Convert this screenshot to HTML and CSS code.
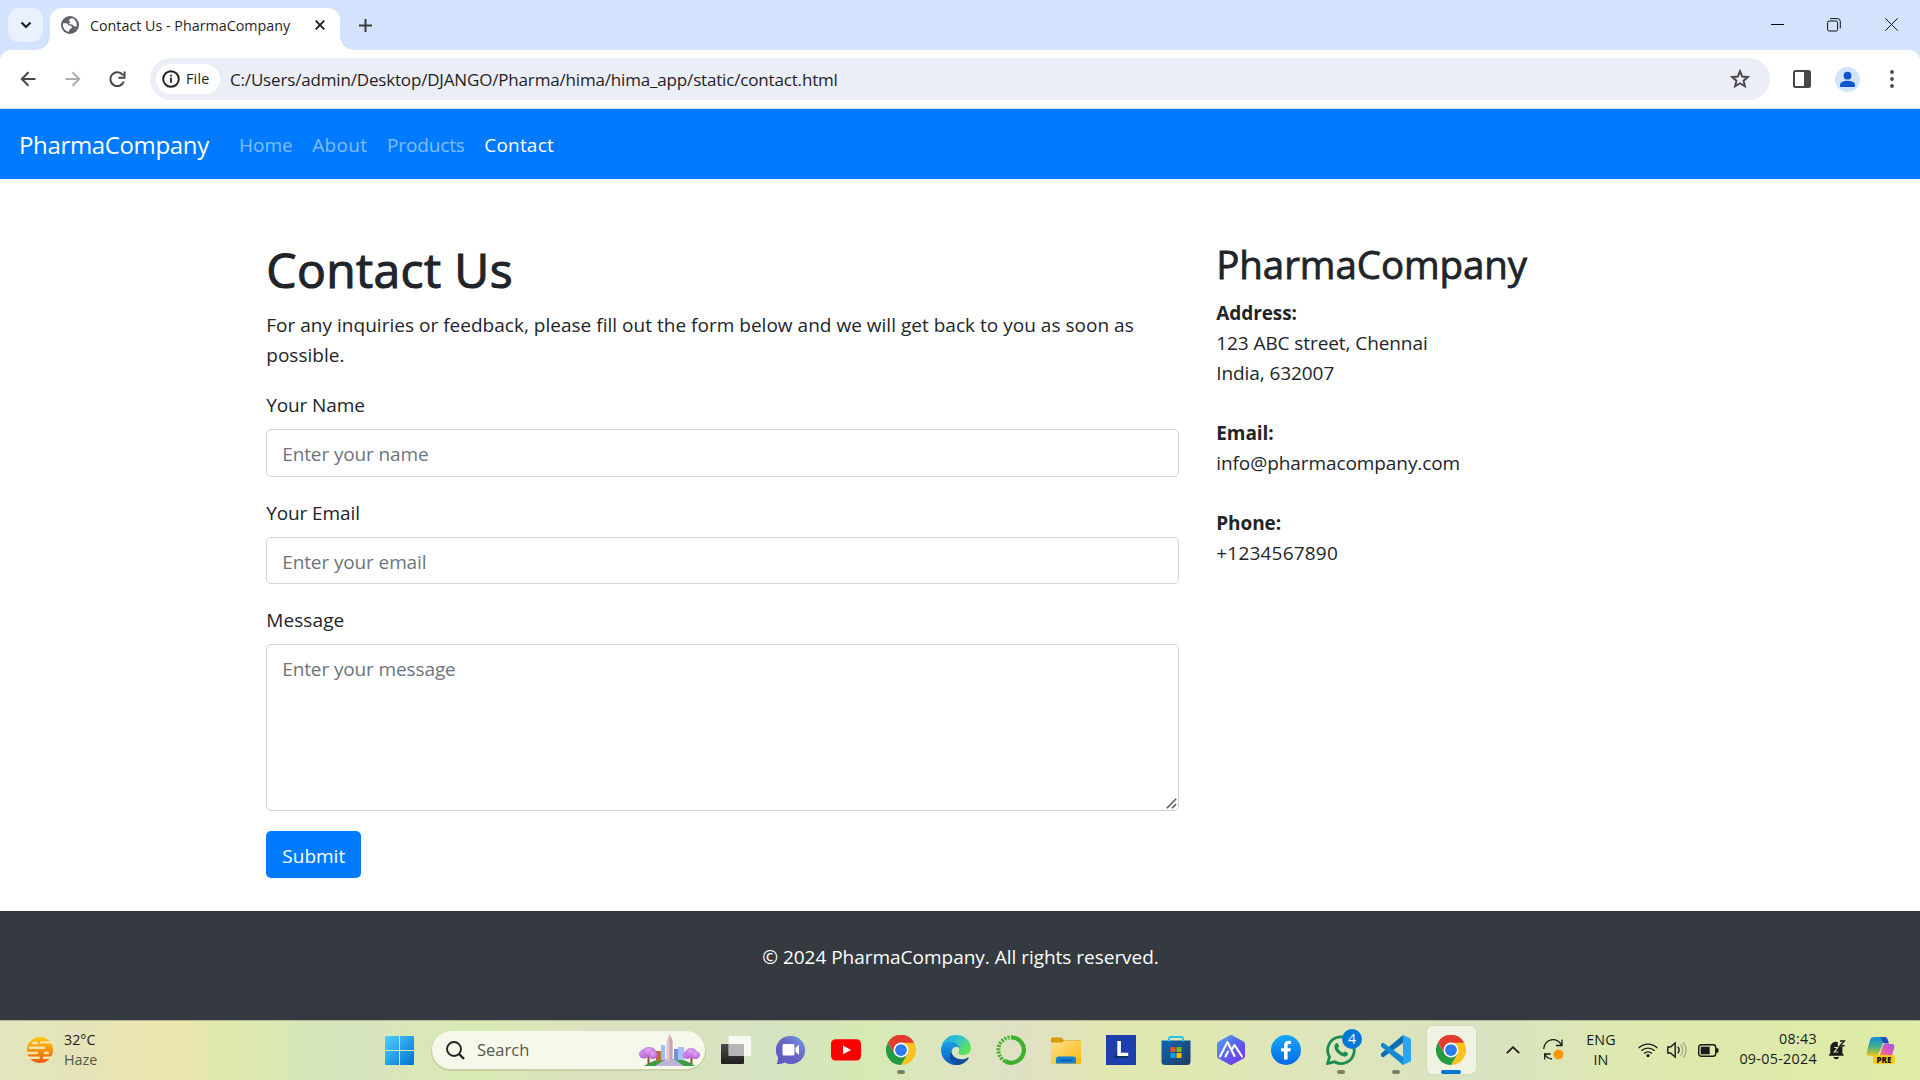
FILE: index.html
```html
<!DOCTYPE html>
<html lang="en">
<head>
<meta charset="utf-8">
<title>Contact Us - PharmaCompany</title>
<link rel="stylesheet" href="styles.css">
</head>
<body>
<svg class="defs" width="0" height="0" aria-hidden="true">
  <defs>
    <symbol id="chrome" viewBox="0 0 48 48">
      <path fill="#e33b2e" d="M24 24 3.2 12A24 24 0 0 1 44.8 12Z"/>
      <path fill="#fcc31e" d="M24 12h20.8A24 24 0 0 1 24 48l10.4-18Z"/>
      <path fill="#249a41" d="M3.2 12A24 24 0 0 0 24 48l10.4-18L24 24 13.6 30Z"/>
      <path fill="#e33b2e" d="M3.2 12 13.6 30 24 12h20.8A24 24 0 0 0 3.2 12Z"/>
      <circle cx="24" cy="24" r="12" fill="#fff"/><circle cx="24" cy="24" r="9.4" fill="#2f7bed"/>
    </symbol>
    <linearGradient id="win" x1="0" y1="0" x2="1" y2="1"><stop offset="0" stop-color="#50d0ff"/><stop offset="1" stop-color="#0070d2"/></linearGradient>
    <linearGradient id="sun" x1="0" y1="0" x2="0" y2="1"><stop offset="0" stop-color="#fccb0c"/><stop offset="1" stop-color="#ec5a08"/></linearGradient>
    <linearGradient id="chat" x1="0" y1="1" x2="1" y2="0"><stop offset="0" stop-color="#5b53c4"/><stop offset=".55" stop-color="#6c68c4"/><stop offset="1" stop-color="#6fa1f3"/></linearGradient>
    <linearGradient id="edgeTop" x1="0" y1="0" x2="1" y2=".6"><stop offset="0" stop-color="#1a9ee0"/><stop offset=".5" stop-color="#33c3d0"/><stop offset="1" stop-color="#60e650"/></linearGradient>
    <linearGradient id="edgeLow" x1="0" y1="0" x2="0" y2="1"><stop offset="0" stop-color="#1a9be4"/><stop offset="1" stop-color="#0a5fc0"/></linearGradient>
    <linearGradient id="fold" x1="0" y1="0" x2="1" y2="1"><stop offset="0" stop-color="#ffe08a"/><stop offset="1" stop-color="#fbb70f"/></linearGradient>
    <linearGradient id="store" x1="0" y1="0" x2="1" y2="1"><stop offset="0" stop-color="#0c67b8"/><stop offset="1" stop-color="#243b60"/></linearGradient>
    <linearGradient id="hex" x1="0" y1="0" x2="1" y2="1"><stop offset="0" stop-color="#53a8f2"/><stop offset=".5" stop-color="#5a62e8"/><stop offset="1" stop-color="#7a2cf0"/></linearGradient>
    <linearGradient id="fb" x1="0" y1="0" x2="0" y2="1"><stop offset="0" stop-color="#17a9fd"/><stop offset="1" stop-color="#0568e4"/></linearGradient>
    <linearGradient id="tv" x1="0" y1="0" x2="0" y2="1"><stop offset="0" stop-color="#4b4b4b"/><stop offset="1" stop-color="#1f1f1f"/></linearGradient>
    <linearGradient id="copA" x1="0" y1="0" x2="0" y2="1"><stop offset="0" stop-color="#1a86e0"/><stop offset=".5" stop-color="#3fb18a"/><stop offset="1" stop-color="#f0c81e"/></linearGradient>
    <linearGradient id="copB" x1="1" y1="0" x2="0" y2="1"><stop offset="0" stop-color="#a553f0"/><stop offset=".6" stop-color="#e35bb0"/><stop offset="1" stop-color="#fb8c50"/></linearGradient>
    <radialGradient id="bloom" cx=".45" cy=".3" r=".7"><stop offset="0" stop-color="#e3a8f5"/><stop offset="1" stop-color="#b562d8"/></radialGradient>
  </defs>
</svg>

<header class="tabstrip">
  <button class="tab-search" aria-label="Search tabs"><svg width="12" height="8" viewBox="0 0 12 8"><path d="M1.500 1.500 6 6l4.500-4.500" fill="none" stroke="#1f1f1f" stroke-width="2.200"/></svg></button>
  <div class="tab">
    <svg class="favicon" width="18" height="18" viewBox="0 0 18 18"><circle cx="9" cy="9" r="9" fill="#5f6368"/><path d="M2 7.500c1.800-.6 4.300-.3 5 1.200.4 1 2.500.4 3.500 1.500.9 1.100-.2 2.500-1.300 2.900-1 .4-.8 1.600-1.300 2.700C4.500 15.600 1.400 12 2 7.500ZM11.500 2.300C9.500 2.400 8 3.200 8 4.400c0 1 1.500.9 1.300 1.800-.2.800-1.800.6-1.600 1.500.3 1.100 2.500.3 3.800 1 1 .5 1 1.600 2.200 1.600.9 0 1.500.3 1.700 1C16.500 7.500 14.800 3.600 11.500 2.300Z" fill="#fff"/></svg>
    <span class="tab-title">Contact Us - PharmaCompany</span>
    <svg class="tab-close" width="10" height="10" viewBox="0 0 10 10"><path d="m.7.7 8.600 8.600M9.300.7.7 9.300" stroke="#1f1f1f" stroke-width="1.900"/></svg>
  </div>
  <svg class="new-tab" width="13" height="13" viewBox="0 0 13 13"><path d="M6.500 0v13M0 6.500h13" stroke="#3c3c3c" stroke-width="2"/></svg>
  <div class="window-controls">
    <svg width="13" height="13" viewBox="0 0 13 13"><path d="M0 6.500h13" stroke="#000"/></svg>
    <svg width="14" height="14" viewBox="0 0 14 14" fill="none" stroke="#111"><rect x=".6" y="3" width="10" height="10" rx="1.500"/><path d="M3.200.6h7.300a2.800 2.800 0 0 1 2.800 2.800v7"/></svg>
    <svg width="13" height="13" viewBox="0 0 13 13"><path d="m.3.3 12.400 12.400M12.700.3.3 12.700" stroke="#111"/></svg>
  </div>
</header>

<div class="toolbar">
  <svg class="back" width="16" height="16" viewBox="0 0 16 16" fill="none" stroke="#474747" stroke-width="2"><path d="M15.500 8H2M8.500 1.200 1.800 8l6.700 6.800"/></svg>
  <svg class="forward" width="16" height="16" viewBox="0 0 16 16" fill="none" stroke="#adadad" stroke-width="2"><path d="M.5 8H14M7.500 1.200 14.200 8l-6.700 6.800"/></svg>
  <svg class="reload" width="17" height="17" viewBox="0 0 17 17" fill="none" stroke="#474747" stroke-width="2"><path d="M14.800 10.500A6.900 6.900 0 1 1 14 4.300M15.500.5v6.200H9.300"/></svg>
  <div class="omnibox">
    <div class="chip">
      <svg width="18" height="18" viewBox="0 0 18 18"><circle cx="9" cy="9" r="7.800" fill="none" stroke="#1f1f1f" stroke-width="1.900"/><path d="M9 7.800v5M9 4.700v1.900" stroke="#1f1f1f" stroke-width="1.800"/></svg>
      <span class="chip-text">File</span>
    </div>
    <span class="url">C:/Users/admin/Desktop/DJANGO/Pharma/hima/hima_app/static/contact.html</span>
    <svg class="star" width="20" height="20" viewBox="0 0 20 20"><path d="m10 2.200 2.200 5.300 5.700.5-4.300 3.700 1.300 5.600-4.900-3-4.900 3 1.300-5.600L2.100 8l5.700-.5Z" fill="none" stroke="#474747" stroke-width="1.900"/></svg>
  </div>
  <svg class="panel" width="18" height="18" viewBox="0 0 18 18"><rect x="1" y="1" width="16" height="16" rx="1.500" fill="none" stroke="#474747" stroke-width="2"/><path d="M11 1h6v16h-6z" fill="#474747"/></svg>
  <svg class="avatar" width="25" height="25" viewBox="0 0 25 25"><circle cx="12.500" cy="12.500" r="12.500" fill="#d3e3fd"/><circle cx="12.500" cy="8.700" r="3.900" fill="#0b57d0"/><path d="M5 20v-2c0-3 4.500-4.300 7.500-4.300S20 15 20 18v2Z" fill="#0b57d0"/></svg>
  <svg class="kebab" width="4" height="18" viewBox="0 0 4 18" fill="#474747"><circle cx="2" cy="2" r="1.900"/><circle cx="2" cy="9" r="1.900"/><circle cx="2" cy="16" r="1.900"/></svg>
</div>

<nav class="navbar">
  <a class="brand">PharmaCompany</a>
  <div class="links">
    <a class="nav-link">Home</a>
    <a class="nav-link nav-about">About</a>
    <a class="nav-link nav-products">Products</a>
    <a class="nav-link nav-contact">Contact</a>
  </div>
</nav>

<main class="container">
  <section class="form-col">
    <h1>Contact Us</h1>
    <p class="lead">For any inquiries or feedback, please fill out the form below and we will get back to you as soon as<br>possible.</p>
    <form>
      <label for="name">Your Name</label>
      <input class="control" id="name" type="text" placeholder="Enter your name">
      <label for="email">Your Email</label>
      <input class="control" id="email" type="email" placeholder="Enter your email">
      <label class="label-message" for="message">Message</label>
      <div class="textarea-wrap">
        <textarea class="control" id="message" placeholder="Enter your message"></textarea>
        <svg class="grip" width="11" height="11" viewBox="0 0 11 11"><path d="M.8 10.200 10.200.8M6 10.200l4.200-4.200" stroke="#555" stroke-width="1.500"/></svg>
      </div>
      <button class="submit" type="button">Submit</button>
    </form>
  </section>
  <aside class="info-col">
    <h2>PharmaCompany</h2>
    <address>
      <strong>Address:</strong><br>
      123 ABC street, Chennai<br>
      India, 632007<br><br>
      <strong>Email:</strong><br>
      info@pharmacompany.com<br><br>
      <strong>Phone:</strong><br>
      <span class="phone">+1234567890</span>
    </address>
  </aside>
</main>

<footer class="footer">© 2024 PharmaCompany. All rights reserved.</footer>

<div class="taskbar">
  <div class="weather">
    <svg width="32" height="28" viewBox="0 0 32 28"><circle cx="16" cy="14" r="13" fill="url(#sun)"/><path d="M9 7h4M17 6.400h13M3 17h10M21 17h3M6 11.800h14M2 21.800h13M20 21.800h7" stroke="#f5e3b0" stroke-width="2.400" stroke-linecap="round"/></svg>
    <div class="weather-text"><span>32°C</span><span class="haze">Haze</span></div>
  </div>
  <svg class="start" width="29" height="29" viewBox="0 0 29 29"><path fill="url(#win)" d="M1 0h13v14H0V1a1 1 0 0 1 1-1ZM15 0h13a1 1 0 0 1 1 1v13H15ZM0 15h14v14H1a1 1 0 0 1-1-1ZM15 15h14v13a1 1 0 0 1-1 1H15Z"/></svg>
  <div class="search">
    <svg width="19" height="19" viewBox="0 0 19 19" fill="none" stroke="#222"><circle cx="8" cy="8" r="7" stroke-width="1.900"/><path d="m13 13 5 5" stroke-width="2.400"/></svg>
    <span class="search-text">Search</span>
    <svg class="city" width="61" height="33" viewBox="0 0 61 33">
      <path d="M5 32q12-8 22-7l7 0q12-1 22 7Z" fill="#3e9b45"/><path d="M16 32 27 25h8l10 7Z" fill="#bdb3d8"/>
      <path d="M17 17h6v10h-6z" fill="#b5713f"/><path d="M22 11h4v15h-4z" fill="#9bbcf4"/><path d="M35 15h5v11h-5z" fill="#6f93cf"/><path d="M39 13h6v13h-6z" fill="#a3c1f5"/>
      <path d="M27.500 7 30.500 0l3 7v20h-6z" fill="#e5c4cb"/><path d="M30.500 0l3 7v20h-3z" fill="#c7a3b8"/>
      <path d="M8.500 22h2v8h-2zM51.500 22h2v8h-2z" fill="#8d4f2f"/>
      <g fill="url(#bloom)"><ellipse cx="5" cy="20" rx="5" ry="4.500"/><ellipse cx="10" cy="18" rx="7" ry="5"/><ellipse cx="14" cy="21" rx="4" ry="4"/><ellipse cx="48" cy="21" rx="4.500" ry="4"/><ellipse cx="52" cy="19" rx="6" ry="5"/><ellipse cx="56.500" cy="21" rx="4.500" ry="4"/></g>
    </svg>
  </div>
  <div class="apps">
    <div class="app"><svg width="30" height="30" viewBox="0 0 30 30"><rect x="0" y="9" width="23" height="20" rx="1" fill="url(#tv)"/><rect x="7.500" y="1" width="22.500" height="20" rx="1" fill="#fff" fill-opacity=".8"/><path d="M7.500 9H23v12H7.500z" fill="#9d9d9d" fill-opacity=".6"/></svg></div>
    <div class="app"><svg width="30" height="30" viewBox="0 0 30 30"><path d="M15 1a14 14 0 1 1-6.300 26.400Q5.500 29.500.5 29q1.800-2.600 1.500-6.700A14 14 0 0 1 15 1Z" fill="url(#chat)"/><rect x="6.500" y="9" width="12" height="11.500" rx="1.500" fill="#fff"/><path d="m19.500 13 3.500-3.500v10.500L19.500 16.800Z" fill="#fff"/></svg></div>
    <div class="app"><svg width="30" height="30" viewBox="0 0 30 30"><rect y="4.300" width="30" height="21.200" rx="4.500" fill="#f00"/><path d="m12 10.500 8 4.400-8 4.400Z" fill="#fff"/></svg></div>
    <div class="app running"><svg width="30" height="30"><use href="#chrome"/></svg></div>
    <div class="app"><svg width="30" height="30" viewBox="0 0 30 30"><path d="M0 15A15 15 0 0 1 15 0c9 0 15 6.500 15 13 0 5-4 7-8 7-3.500 0-5-1.200-4.600-2.500C19 15 18.500 11 14 11 8 8 2 9.500 0 15Z" fill="url(#edgeTop)"/><path d="M0 15C.5 9.500 5 7 9.500 7 14.500 7 18 10 18.500 13 14 9.500 10 14 10.600 19c.5 5 4.400 9.500 9.400 10.200A15 15 0 0 1 0 15Z" fill="url(#edgeLow)"/><path d="M10.600 17c1 5 5.400 7.200 9.900 7.200 3 0 5-1 6.500-1.800q1.500-.2.500 1.200C25 27.500 20.500 30 16.500 30 9 29 7 21 10.600 17Z" fill="#0d4f9e"/></svg></div>
    <div class="app"><svg width="30" height="30" viewBox="0 0 30 30" fill="none" stroke="#3eb02a"><path d="M15 2.300a12.700 12.700 0 1 1-6 23.800" stroke-width="4.200"/><path d="M9 26.100A12.700 12.700 0 0 1 15 2.300" stroke-width="4" stroke-dasharray="2 1.300"/><path d="M9 24A12 12 0 0 1 15 3" stroke="#dde5be" stroke-width="1" stroke-dasharray="1.500 2.500"/></svg></div>
    <div class="app"><svg width="30" height="30" viewBox="0 0 30 30"><path d="M0 4a1.500 1.500 0 0 1 1.500-1.500h9L13 5.500h16a1 1 0 0 1 1 1V12H0Z" fill="#dd9a08"/><path d="M0 7.500h11l2-1.500h17v22a1 1 0 0 1-1 1H1a1 1 0 0 1-1-1Z" fill="url(#fold)"/><path d="M5 28.500V24a2.500 2.500 0 0 1 2.500-2.500h15A2.500 2.500 0 0 1 25 24v4.500Z" fill="#1381d6"/><path d="M8.500 25.300h13" stroke="#0a4f8f" stroke-width="1.200"/></svg></div>
    <div class="app"><svg width="30" height="30" viewBox="0 0 30 30"><path fill="#1d3fae" d="M0 0h30v30H0z"/><path d="m11 17-3 6h13l1-2Z" fill="#142c60"/><path d="M11.300 6h3.600v11.800h7.300V21H11.300Z" fill="#fff"/></svg></div>
    <div class="app"><svg width="30" height="30" viewBox="0 0 30 30"><path d="M.5 5.500h29v21a3.500 3.500 0 0 1-3.500 3.500H4a3.500 3.500 0 0 1-3.500-3.500Z" fill="url(#store)"/><path d="M8 6.500V3.300A1.300 1.300 0 0 1 9.300 2h11.400A1.300 1.300 0 0 1 22 3.300v3.200" fill="none" stroke="#2ac0ee" stroke-width="1.900"/><path fill="#f25022" d="M9.500 12h5v5h-5z"/><path fill="#7fba00" d="M15.500 12h5v5h-5z"/><path fill="#00a4ef" d="M9.500 18h5v5h-5z"/><path fill="#ffb900" d="M15.500 18h5v5h-5z"/></svg></div>
    <div class="app"><svg width="30" height="30" viewBox="0 0 30 30"><path d="M13.500.4a3 3 0 0 1 3 0l11 6a3 3 0 0 1 1.500 2.600v12a3 3 0 0 1-1.500 2.600l-11 6a3 3 0 0 1-3 0l-11-6A3 3 0 0 1 1 21V9a3 3 0 0 1 1.500-2.600Z" fill="url(#hex)"/><path d="M4 21.500 11.500 7l7 14M9.500 21.500l2.500-5M16.500 13.500l2-3.500L26 21.500" fill="none" stroke="#fff" stroke-width="2.100" stroke-linecap="round" stroke-linejoin="round"/></svg></div>
    <div class="app"><svg width="30" height="30" viewBox="0 0 30 30"><circle cx="15" cy="15" r="15" fill="url(#fb)"/><path d="M13 24.500v-8h-3v-3.300h3V10.500c0-3 1.700-4.700 4.500-4.700l2.500.2v3h-1.700c-1.400 0-1.700.7-1.700 1.700v2.500h3.300l-.6 3.300h-2.700v8Z" fill="#fff"/></svg></div>
    <div class="app running"><svg width="30" height="30" viewBox="0 0 30 30"><path d="M1.600 28.400 3.500 22A13.300 13.300 0 1 1 8.400 26.800Z" fill="none" stroke="#1d8d54" stroke-width="2.800"/><path d="M10 8.300c.8-.6 1.700-.3 2 .4l1 2.300c.2.900-1 1.500-1 2.200 1 2 2.800 3.700 5 4.600.7.100 1.400-1.400 2.200-1.200l2.500 1.300c1 .7-.2 3-2 3.600-3.500 1-11-4-11.300-9.700 0-1.300.6-2.700 1.600-3.500Z" fill="#1d8d54"/></svg><span class="badge">4</span></div>
    <div class="app running"><svg width="30" height="30" viewBox="0 0 30 30"><path d="M22 0 0 18.500v2.500l2 1.500 20-14.500Z" fill="#0d6fb4"/><path d="M22 30 0 11.500V9l2-1.500L22 22Z" fill="#1488cf"/><path d="m22 0 7 3.200q1 .5 1 1.600v20.400q0 1.100-1 1.600L22 30Z" fill="#2aa5f2"/></svg></div>
    <div class="app active"><svg width="30" height="30"><use href="#chrome"/></svg></div>
  </div>
  <svg class="chevron" width="14" height="8" viewBox="0 0 14 8"><path d="m.8 7.200 6.200-6 6.200 6" fill="none" stroke="#1b1b1b" stroke-width="1.800"/></svg>
  <svg class="sync" width="22" height="22" viewBox="0 0 22 22" fill="none" stroke="#1b1b1b" stroke-width="1.300"><path d="M.8 10A9.300 9.300 0 0 1 18.500 6M19 .5V6.500h-6M9 20A9 9 0 0 1 2 15.500M1.700 20.500v-5.500h6"/><circle cx="15.500" cy="15.500" r="5" fill="#ff9500" stroke="none"/></svg>
  <div class="lang"><span>ENG</span><span>IN</span></div>
  <svg class="wifi" width="20" height="16" viewBox="0 0 20 16" fill="none" stroke="#1b1b1b" stroke-width="1.400"><path d="M.7 6a13.200 13.200 0 0 1 18.600 0M3.500 8.800a9.200 9.200 0 0 1 13 0M6.200 11.500a5.300 5.300 0 0 1 7.600 0"/><circle cx="10" cy="13.600" r="1.600" fill="#1b1b1b" stroke="none"/></svg>
  <svg class="volume" width="20" height="18" viewBox="0 0 20 18" fill="none" stroke="#1b1b1b" stroke-width="1.400"><path d="M.8 6h2.700L8.200 2v14L3.500 12H.8Z"/><path d="M10.800 5.800a4.500 4.500 0 0 1 0 6.400"/><path d="M13.500 3.500a7.800 7.800 0 0 1 0 11M16 1.500a10.500 10.500 0 0 1 0 15" stroke="#a9b088"/></svg>
  <svg class="battery" width="21" height="13" viewBox="0 0 21 13"><rect x=".7" y=".7" width="17" height="11.600" rx="2.500" fill="none" stroke="#1b1b1b" stroke-width="1.400"/><rect x="2.700" y="2.700" width="9" height="7.600" fill="#1b1b1b"/><path d="M18 4.200h1.500a1 1 0 0 1 1 1v2.600a1 1 0 0 1-1 1H18Z" fill="#1b1b1b"/></svg>
  <div class="clock"><span>08:43</span><span>09-05-2024</span></div>
  <svg class="bell" width="18" height="20" viewBox="0 0 18 20"><path d="M2.300 13V7.500A5.800 5.800 0 0 1 9.800 2v4.500h4.600V13L16 15.700H.6Z" fill="#1b1b1b"/><path d="M5.500 17h5.500a2.800 2.800 0 0 1-5.500 0Z" fill="#1b1b1b"/><path d="M6.200 7.500h3.500L6.200 12h3.800" fill="none" stroke="#dfeaab" stroke-width="1.100"/><path d="M12 1h4.300L12 5.700h4.600" fill="none" stroke="#1b1b1b" stroke-width="1.400"/></svg>
  <div class="copilot">
    <svg width="30" height="24" viewBox="0 0 30 24"><path d="M8 1h10.500q2 0 2.700 2.500L22 7h-5l-4.500 11q-.8 2-2.800 2H3Q0 20 .7 16.500L4 4Q5 1 8 1Z" fill="url(#copA)"/><path d="M14 1h5q2 0 2.700 2.500L23 7.500h-4Q17 7.500 16 4 15.300 1.500 14 1Z" fill="#1d4ac0"/><path d="M18.500 8H26q3 0 2.200 3.500L26 20H13.500l3-9.500Q17 8 18.500 8Z" fill="url(#copB)"/></svg>
    <span class="pre">PRE</span>
  </div>
</div>
</body>
</html>
```
FILE: styles.css
```css
* { box-sizing: border-box; }
body {
  margin: 0;
  width: 1920px;
  height: 1080px;
  overflow: hidden;
  display: flex;
  flex-direction: column;
  background: #fff;
  color: #212529;
  font: 19px/30px "Open Sans", "Noto Sans", sans-serif;
}
svg { display: block; flex: none; }
.defs { position: absolute; }

/* Browser tab strip */
.tabstrip {
  flex: none;
  height: 50px;
  display: flex;
  align-items: flex-start;
  padding: 8px 22px 0 8px;
  background: #d3e3fd;
}
.tab-search {
  width: 35px;
  height: 34px;
  border: 0;
  padding: 0;
  border-radius: 11px;
  background: #e9f0fe;
  display: grid;
  place-items: center;
}
.tab {
  position: relative;
  width: 290px;
  height: 42px;
  margin-left: 7px;
  padding: 0 15px 8px 11px;
  display: flex;
  align-items: center;
  border-radius: 12px 12px 0 0;
  background: #fff;
}
.tab::before, .tab::after {
  content: "";
  position: absolute;
  bottom: 0;
  width: 14px;
  height: 14px;
}
.tab::before { left: -14px; background: radial-gradient(circle at 0 0, transparent 13.5px, #fff 14px); }
.tab::after { right: -14px; background: radial-gradient(circle at 100% 0, transparent 13.5px, #fff 14px); }
.tab-title { margin-left: 11px; padding-top: 1px; font-size: 14.3px; line-height: 20px; color: #1f1f1f; white-space: nowrap; }
.tab-close { margin-left: auto; }
.new-tab { margin: 11px 0 0 19px; }
.window-controls { margin: 10px 0 0 auto; display: flex; gap: 44px; }
.window-controls svg:first-child { margin-right: -1px; }

/* Address bar */
.toolbar {
  flex: none;
  height: 59px;
  display: flex;
  align-items: center;
  padding: 0 26px 0 20px;
  border-bottom: 1px solid #dcdfe3;
  background:
    radial-gradient(circle at 10px 10px, #fff 9.5px, #d3e3fd 10px) 0 0 / 10px 10px no-repeat,
    radial-gradient(circle at 0 10px, #fff 9.5px, #d3e3fd 10px) 100% 0 / 10px 10px no-repeat,
    #fff;
}
.forward { margin-left: 29px; }
.reload { margin-left: 28px; }
.omnibox {
  width: 1620px;
  height: 42px;
  margin-left: 24px;
  padding: 0 20px 0 6px;
  display: flex;
  align-items: center;
  border-radius: 21px;
  background: #ebedf7;
}
.chip {
  width: 64px;
  height: 30px;
  padding-left: 6px;
  display: flex;
  align-items: center;
  gap: 6px;
  border-radius: 15px;
  background: #fff;
}
.chip-text { font-size: 14.3px; line-height: 20px; letter-spacing: .2px; color: #1f1f1f; }
.url { margin-left: 10px; padding-top: 1px; font-size: 17px; letter-spacing: -.17px; color: #1f1f1f; }
.star { margin-left: auto; }
.panel { margin-left: 23px; }
.avatar { margin-left: 24px; }
.kebab { margin-left: 30px; }

/* Site navigation */
.navbar {
  flex: none;
  height: 70px;
  display: flex;
  align-items: center;
  padding: 2px 20px 0 19px;
  background: #007bff;
}
.brand { width: 220px; font-size: 24px; letter-spacing: -.35px; color: #fff; }
.links { display: flex; gap: 19.5px; }
.nav-link { color: rgba(255, 255, 255, .5); }
.nav-link.nav-about { letter-spacing: .35px; }
.nav-link.nav-products { letter-spacing: -.13px; }
.nav-link.nav-contact { letter-spacing: .2px; color: #fff; }

/* Contact page */
.container {
  flex: none;
  width: 1425px;
  height: 732px;
  margin: 0 auto;
  padding-top: 61.3px;
  display: flex;
}
.form-col { width: 950px; padding: 0 18.75px; }
.info-col { width: 475px; padding: 0 18.75px; }
h1, h2 { margin: 0 0 10px; font-weight: 500; -webkit-text-stroke: .8px #212529; }
h1 { font-size: 48px; line-height: 60px; letter-spacing: .4px; -webkit-text-stroke-width: 1.1px; }
h2 { font-size: 38.5px; line-height: 48px; letter-spacing: -.08px; }
.lead { margin: 0 0 20px; letter-spacing: .02px; }
form { margin: 0; }
label { display: block; margin-bottom: 9px; letter-spacing: -.11px; }
.label-message { letter-spacing: .1px; }
.control {
  display: block;
  width: 100%;
  height: 47.5px;
  margin-bottom: 21px;
  padding: 9px 15px 7px;
  border: 1px solid #ced4da;
  border-radius: 5px;
  background: #fff;
  font: inherit;
  letter-spacing: -.12px;
}
.control::placeholder { color: #6c757d; opacity: 1; }
.textarea-wrap { position: relative; }
textarea.control { height: 167px; margin-bottom: 20px; resize: none; }
.grip { position: absolute; right: 2px; bottom: 2px; }
.submit {
  width: 95px;
  height: 47px;
  padding: 2px 0 0;
  border: 0;
  border-radius: 5px;
  background: #007bff;
  color: #fff;
  font: inherit;
}
address { font-style: normal; letter-spacing: -.08px; }
.phone { letter-spacing: .2px; }

.footer {
  flex: none;
  height: 109px;
  padding: 31px 0 0 1px;
  text-align: center;
  letter-spacing: -.02px;
  background: #343a40;
  color: #fff;
}

/* Windows taskbar */
.taskbar {
  flex: none;
  height: 60px;
  display: flex;
  align-items: center;
  padding-bottom: 1px;
  border-top: 1px solid #b5b599;
  background: linear-gradient(90deg, #e2e6bd 0, #e5e4b8 80px, #ece4b0 150px, #ebe5ac 185px, #e0e9ab 215px, #d9e8b4 280px, #d6e4c0 350px, #dae6ba 400px, #d8eab2 480px, #dce2c0 590px, #d8e3c0 700px, #d6e3c2 770px, #d6eab2 870px, #dce5c0 950px, #dfe1c4 1020px, #e1e5b4 1090px, #e0e8b0 1160px, #dfe6ba 1300px, #d9e3c2 1490px, #dde9b0 1610px, #deeca6 1920px);
  font-size: 14.3px;
  line-height: 20px;
  color: #1b1b1b;
}
.weather { width: 385px; padding: 0 0 1px 24px; display: flex; align-items: center; gap: 8px; }
.weather-text { display: flex; flex-direction: column; align-items: flex-start; }
.haze { color: #53564a; }
.search {
  width: 273px;
  height: 38px;
  margin: 0 3.5px 0 18px;
  padding: 0 5px 0 14px;
  display: flex;
  align-items: center;
  border-radius: 19px;
  background: #f5f8ea;
  box-shadow: 0 1px 0 1px #c8d3a8;
}
.search-text { margin-left: 12px; font-size: 16.5px; color: #55584e; }
.city { margin-left: auto; }
.apps { display: flex; }
.app {
  position: relative;
  width: 55px;
  height: 48px;
  display: grid;
  place-items: center;
}
.app > svg { position: relative; }
.app.running::after, .app.active::after {
  content: "";
  position: absolute;
  left: 23.5px;
  bottom: 0;
  width: 8px;
  height: 4px;
  border-radius: 2px;
  background: #7d8069;
}
.app.active::before {
  content: "";
  position: absolute;
  inset: 0 3px;
  border-radius: 5px;
  background: #f0f3e2;
  box-shadow: 0 0 1px #aab090;
}
.app.active::after { left: 17.5px; width: 20px; background: #0078d4; }
.badge {
  position: absolute;
  left: 28.5px;
  top: 3px;
  width: 20px;
  height: 20px;
  border-radius: 50%;
  background: #0078d4;
  color: #fff;
  font-size: 14px;
  text-align: center;
}
.chevron { margin-left: 27.5px; }
.sync { margin-left: 23px; }
.lang { width: 40px; margin-left: 16px; padding-bottom: 1px; letter-spacing: .1px; display: flex; flex-direction: column; align-items: center; }
.wifi { margin-left: 17px; }
.volume { margin-left: 9px; }
.battery { margin-left: 11px; }
.clock { width: 98px; padding-bottom: 2px; letter-spacing: .3px; display: flex; flex-direction: column; align-items: flex-end; }
.bell { margin-left: 11px; }
.copilot { position: relative; margin-left: 20px; height: 28px; }
.pre {
  position: absolute;
  left: 7px;
  top: 19px;
  width: 22px;
  height: 9px;
  border-radius: 2px;
  background: #ffc81e;
  color: #111;
  font-size: 8px;
  font-weight: 800;
  line-height: 9px;
  text-align: center;
}
```
